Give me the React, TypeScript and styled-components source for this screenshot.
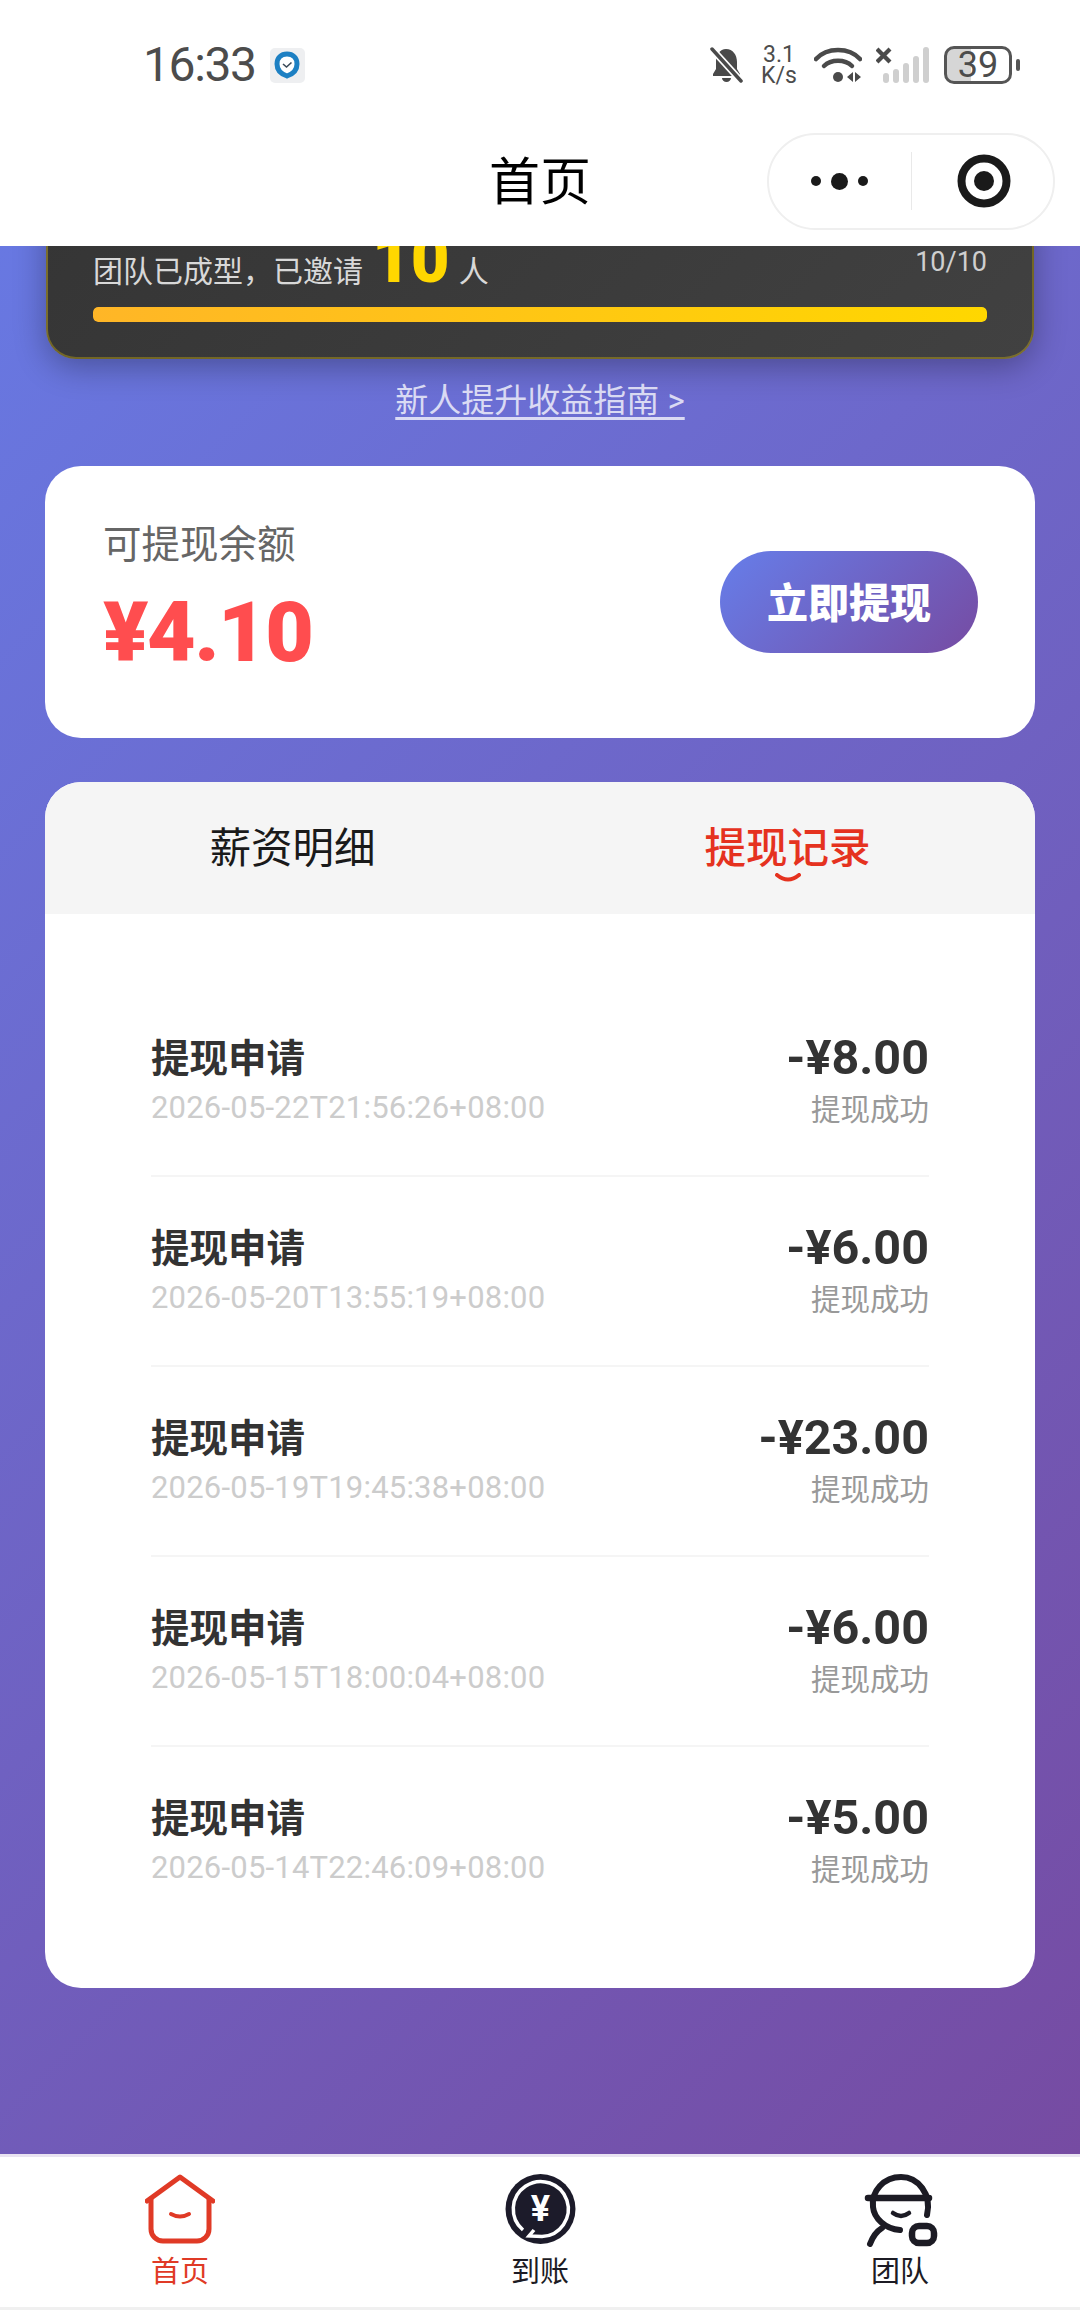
import React from 'react';
import styled, { createGlobalStyle } from 'styled-components';

const Global = createGlobalStyle`
  html, body { margin: 0; padding: 0; background: #fff; }
  * { box-sizing: border-box; }
  body { font-family: Roboto, "Noto Sans CJK SC", sans-serif; }
`;

const Screen = styled.div`
  width: 1080px;
  height: 2310px;
  display: flex;
  flex-direction: column;
  overflow: hidden;
`;

const Header = styled.header`
  height: 246px;
  flex: none;
  background: #fff;
  position: relative;
  z-index: 2;
`;

const StatusBar = styled.div`
  height: 116px;
  padding: 46px 60px 0 143px;
  display: flex;
  justify-content: space-between;
  align-items: flex-start;
`;

const TimeGroup = styled.div`
  display: flex;
  align-items: center;
  gap: 14px;
  height: 38px;
`;

const Time = styled.span`
  font-size: 48px;
  line-height: 38px;
  color: #4c4c4c;
  letter-spacing: -1.4px;
`;

const ShieldBadge = styled.span`
  width: 35px;
  height: 35px;
  border-radius: 5px;
  background: #eeeff1;
  display: flex;
  align-items: center;
  justify-content: center;
`;

const StatusIcons = styled.div`
  display: flex;
  align-items: center;
  height: 38px;
`;

const Speed = styled.span`
  margin: 0 17px 0 18px;
  width: 36px;
  font-size: 23px;
  line-height: 21px;
  color: #4c4c4c;
  text-align: center;
  display: flex;
  flex-direction: column;
  align-items: center;
  white-space: nowrap;
`;

const SignalIcon = styled.svg`
  margin: 0 14px;
`;

const Battery = styled.span`
  width: 68px;
  height: 38px;
  border: 3px solid #555;
  border-radius: 10px;
  background: linear-gradient(to right, #d6d6d6 39%, transparent 39%);
  font-size: 36px;
  line-height: 32px;
  color: #4c4c4c;
  text-align: center;
`;

const BatteryNub = styled.span`
  width: 4px;
  height: 12px;
  margin-left: 4px;
  border-radius: 2px;
  background: #555;
`;

const NavBar = styled.div`
  height: 130px;
  padding: 0 25px;
  display: grid;
  grid-template-columns: 1fr auto 1fr;
  align-items: center;
`;

const NavTitle = styled.h1`
  grid-column: 2;
  margin: 0;
  padding-top: 3px;
  font-size: 51px;
  font-weight: 400;
  line-height: 60px;
  color: #000;
`;

const Capsule = styled.div`
  grid-column: 3;
  justify-self: end;
  width: 288px;
  height: 97px;
  border: 2px solid #efefef;
  border-radius: 49px;
  display: flex;
  align-items: center;
`;

const MoreDots = styled.span`
  width: 142px;
  padding-right: 2px;
  display: flex;
  justify-content: center;
  align-items: center;
  gap: 10px;
`;

const Dot = styled.span<{ $size: number }>`
  width: ${p => p.$size}px;
  height: ${p => p.$size}px;
  border-radius: 50%;
  background: #1a1a1a;
`;

const CapsuleDivider = styled.span`
  width: 1px;
  height: 58px;
  background: #e9e9e9;
`;

const TargetSlot = styled.span`
  flex: 1;
  padding-left: 3px;
  display: flex;
  justify-content: center;
  align-items: center;
`;

const Content = styled.main`
  flex: 1;
  min-height: 0;
  padding: 0 45px;
  overflow: hidden;
  background: linear-gradient(135deg, #667eea 0%, #764ba2 100%) bottom / 100% 2300px no-repeat;
`;

const TeamCard = styled.section`
  margin: -50px 1px 0;
  padding: 0 45px 35px;
  border: 2px solid rgba(255, 215, 0, 0.3);
  border-radius: 30px;
  background: linear-gradient(135deg, #353535, #414141);
  box-shadow: 0 8px 32px rgba(0, 0, 0, 0.3);
`;

const TeamRow = styled.div`
  display: flex;
  justify-content: space-between;
  align-items: flex-start;
  height: 109px;
  padding-top: 41px;
`;

const TeamText = styled.div`
  display: flex;
  align-items: baseline;
  font-size: 30px;
  line-height: 40px;
  color: #d8d8d8;
  white-space: nowrap;
`;

const TeamCount = styled.strong`
  margin: 0 9px 0 9px;
  font-size: 67px;
  line-height: 40px;
  font-weight: 900;
  color: #ffd700;
`;

const TeamProgressText = styled.span`
  margin-top: 9px;
  font-size: 27px;
  line-height: 28px;
  color: #cfcfcf;
`;

const ProgressTrack = styled.div`
  height: 15px;
  border-radius: 5px;
  overflow: hidden;
  background: rgba(255, 255, 255, 0.1);
`;

const ProgressFill = styled.div`
  height: 100%;
  border-radius: 5px;
  background: linear-gradient(90deg, #ffb627, #ffd700);
`;

const GuideLink = styled.a`
  display: block;
  width: max-content;
  margin: 21px auto 0;
  font-size: 33px;
  line-height: 42px;
  color: rgba(255, 255, 255, 0.75);
  text-decoration: underline;
  text-underline-offset: 5px;
`;

const BalanceCard = styled.section`
  margin-top: 44px;
  height: 272px;
  padding: 0 57px 0 58px;
  border-radius: 36px;
  background: #fff;
  display: flex;
  justify-content: space-between;
  align-items: center;
`;

const BalanceInfo = styled.div`
  display: flex;
  flex-direction: column;
  gap: 21px;
  padding-bottom: 6px;
`;

const BalanceLabel = styled.span`
  font-size: 38.5px;
  line-height: 46px;
  color: #666;
`;

const BalanceValue = styled.strong`
  font-size: 84px;
  line-height: 88px;
  font-weight: 900;
  letter-spacing: -1.5px;
  color: #ff4d4f;
`;

const WithdrawButton = styled.button`
  width: 258px;
  height: 102px;
  padding: 0 0 4px;
  border: 0;
  border-radius: 51px;
  background: linear-gradient(135deg, #667eea, #764ba2);
  color: #fff;
  font-family: inherit;
  font-size: 41px;
  font-weight: 900;
`;

const RecordsCard = styled.section`
  margin-top: 44px;
  border-radius: 36px;
  background: #fff;
  overflow: hidden;
`;

const Tabs = styled.div`
  height: 132px;
  background: #f5f5f5;
  display: grid;
  grid-template-columns: 1fr 1fr;
`;

const TabItem = styled.div<{ $active?: boolean }>`
  display: flex;
  flex-direction: column;
  align-items: center;
  padding-top: 40px;
  font-size: 41.5px;
  font-weight: ${p => (p.$active ? 500 : 400)};
  line-height: 54px;
  color: ${p => (p.$active ? '#e5321f' : '#1a1a1a')};
`;

const TabSmile = styled.svg`
  margin-top: -3px;
`;

const RecordList = styled.ul`
  list-style: none;
  margin: 0;
  padding: 73px 106px 51px;
`;

const RecordRow = styled.li`
  height: 190px;
  padding-top: 46px;
  display: flex;
  justify-content: space-between;
  border-bottom: 2px solid #f5f5f5;
  &:last-child { border-bottom: 0; }
`;

const RecordCol = styled.div<{ $right?: boolean }>`
  display: flex;
  flex-direction: column;
  align-items: ${p => (p.$right ? 'flex-end' : 'flex-start')};
`;

const RecordTitle = styled.span`
  font-size: 38.5px;
  line-height: 52px;
  font-weight: 700;
  color: #333;
`;

const RecordDate = styled.span`
  margin-top: 3px;
  font-size: 31px;
  line-height: 40px;
  letter-spacing: 0.2px;
  color: #ccc;
`;

const RecordAmount = styled.span`
  font-size: 48.5px;
  line-height: 50px;
  font-weight: 700;
  color: #333;
`;

const RecordStatus = styled.span`
  margin-top: 7px;
  font-size: 29.5px;
  line-height: 40px;
  color: #999;
`;

const TabBar = styled.nav`
  flex: none;
  height: 156px;
  border-top: 3px solid #e9e3f1;
  border-bottom: 3px solid #f0f0f0;
  background: #fff;
  display: grid;
  grid-template-columns: repeat(3, 1fr);
`;

const BarItem = styled.div<{ $active?: boolean }>`
  padding-top: 17px;
  display: flex;
  flex-direction: column;
  align-items: center;
  font-size: 29px;
  line-height: 34px;
  color: ${p => (p.$active ? '#e03a26' : '#1c1b24')};
`;

const BarIcon = styled.svg`
  display: block;
  margin-bottom: 11px;
`;

const TeamBarIcon = styled(BarIcon)`
  margin-left: 2px;
  margin-bottom: 8px;
`;

const records = [
  { date: '2026-05-22T21:56:26+08:00', amount: '-¥8.00' },
  { date: '2026-05-20T13:55:19+08:00', amount: '-¥6.00' },
  { date: '2026-05-19T19:45:38+08:00', amount: '-¥23.00' },
  { date: '2026-05-15T18:00:04+08:00', amount: '-¥6.00' },
  { date: '2026-05-14T22:46:09+08:00', amount: '-¥5.00' },
];

const BellOffIcon = () => (
  <svg width="33" height="38" viewBox="0 0 33 38">
    <path d="M16 3c7 0 11 6 11 13v7l3 5v2H3v-2l3-5v-8C6 9 10 3 16 3z" fill="#4a4a4a" />
    <path d="M12 32h9a4.5 4 0 0 1-9 0z" fill="#4a4a4a" />
    <path d="M1 2 32 36" stroke="#fff" strokeWidth="7" />
    <path d="M2 3 31 35" stroke="#4a4a4a" strokeWidth="3.5" strokeLinecap="round" />
  </svg>
);

const WifiIcon = () => (
  <svg width="48" height="38" viewBox="0 0 48 38" fill="none">
    <path d="M2 13C13 1 35 1 46 13" stroke="#4a4a4a" strokeWidth="4.5" strokeLinecap="round" />
    <path d="M10 20c7-7 21-7 28 0" stroke="#4a4a4a" strokeWidth="4.5" strokeLinecap="round" />
    <circle cx="24" cy="31" r="5" fill="#4a4a4a" />
    <path d="M33 31l6-5v10zM41 26l6 5-6 5z" fill="#4a4a4a" />
  </svg>
);

const SignalBars = () => (
  <SignalIcon width="54" height="38" viewBox="0 0 54 38">
    <path d="M1 3l13 13M14 3 1 16" stroke="#4a4a4a" strokeWidth="4.2" />
    {[10, 14, 20, 27, 36].map((h, i) => (
      <rect key={h} x={7 + i * 10} y={37 - h} width="6" height={h} rx="3" fill="#cfcfcf" />
    ))}
  </SignalIcon>
);

const HomeIcon = () => (
  <BarIcon width="70" height="70" viewBox="0 0 70 70" fill="none" stroke="#e03a26" strokeLinecap="round" strokeLinejoin="round">
    <path d="M2 27 35 3l33 24" strokeWidth="5" />
    <path d="M6 25v30a12 12 0 0 0 12 12h34a12 12 0 0 0 12-12V25" strokeWidth="5" />
    <path d="M26 40q9 5 18 0" strokeWidth="4" />
  </BarIcon>
);

const CoinIcon = () => (
  <BarIcon width="71" height="70" viewBox="0 0 71 70" fill="none">
    <circle cx="35.5" cy="35" r="35" fill="#1c1b2a" />
    <path d="M18 56A27.5 27.5 0 1 1 37 62.5L24 62l5-6" stroke="#fff" strokeWidth="3.5" />
    <text x="35.5" y="47" textAnchor="middle" fontSize="36" fontWeight="700" fill="#fff" fontFamily="Roboto, sans-serif">¥</text>
  </BarIcon>
);

const TeamIcon = () => (
  <TeamBarIcon width="74" height="73" viewBox="0 0 74 73" fill="none" stroke="#1c1b24" strokeLinecap="round">
    <path d="M63 41C68 20 54 3 37 3 20 3 7 17 9 33c1 11 12 22 27 23" strokeWidth="6" />
    <path d="M4 24h61" strokeWidth="6.5" />
    <path d="M29 39q8 6 16 0" strokeWidth="4.5" />
    <path d="M18 54Q10 59 6 70" strokeWidth="6" />
    <rect x="48" y="52" width="22" height="17" rx="7" strokeWidth="6.5" />
  </TeamBarIcon>
);

export default function App() {
  return (
    <Screen>
      <Global />
      <Header>
        <StatusBar>
          <TimeGroup>
            <Time>16:33</Time>
            <ShieldBadge>
              <svg width="26" height="28" viewBox="0 0 26 28" fill="none">
                <path d="M13 3c6 0 10 4 10 10 0 6-4 10-10 12C7 23 3 19 3 13 3 7 7 3 13 3z" fill="#fff" stroke="#1d80c3" strokeWidth="5" />
                <path d="M9 13l3.5 3 5-4.5" stroke="#3b4a59" strokeWidth="1.6" />
              </svg>
            </ShieldBadge>
          </TimeGroup>
          <StatusIcons>
            <BellOffIcon />
            <Speed><span>3.1</span><span>K/s</span></Speed>
            <WifiIcon />
            <SignalBars />
            <Battery>39</Battery>
            <BatteryNub />
          </StatusIcons>
        </StatusBar>
        <NavBar>
          <NavTitle>首页</NavTitle>
          <Capsule>
            <MoreDots><Dot $size={10} /><Dot $size={17} /><Dot $size={10} /></MoreDots>
            <CapsuleDivider />
            <TargetSlot>
              <svg width="54" height="54" viewBox="0 0 54 54">
                <circle cx="27" cy="27" r="22.5" fill="none" stroke="#1a1a1a" strokeWidth="8" />
                <circle cx="27" cy="27" r="10" fill="#1a1a1a" />
              </svg>
            </TargetSlot>
          </Capsule>
        </NavBar>
      </Header>

      <Content>
        <TeamCard>
          <TeamRow>
            <TeamText>{'团队已成型\uFF0C已邀请'}<TeamCount>10</TeamCount>人</TeamText>
            <TeamProgressText>10/10</TeamProgressText>
          </TeamRow>
          <ProgressTrack><ProgressFill style={{ width: `${(10 / 10) * 100}%` }} /></ProgressTrack>
        </TeamCard>
        <GuideLink>新人提升收益指南 &gt;</GuideLink>

        <BalanceCard>
          <BalanceInfo>
            <BalanceLabel>可提现余额</BalanceLabel>
            <BalanceValue>¥4.10</BalanceValue>
          </BalanceInfo>
          <WithdrawButton>立即提现</WithdrawButton>
        </BalanceCard>

        <RecordsCard>
          <Tabs>
            <TabItem>薪资明细</TabItem>
            <TabItem $active>
              提现记录
              <TabSmile width="28" height="12" viewBox="0 0 28 12" fill="none">
                <path d="M3 2q11 9 22 0" stroke="#e5321f" strokeWidth="4" strokeLinecap="round" />
              </TabSmile>
            </TabItem>
          </Tabs>
          <RecordList>
            {records.map(r => (
              <RecordRow key={r.date}>
                <RecordCol>
                  <RecordTitle>提现申请</RecordTitle>
                  <RecordDate>{r.date}</RecordDate>
                </RecordCol>
                <RecordCol $right>
                  <RecordAmount>{r.amount}</RecordAmount>
                  <RecordStatus>提现成功</RecordStatus>
                </RecordCol>
              </RecordRow>
            ))}
          </RecordList>
        </RecordsCard>
      </Content>

      <TabBar>
        <BarItem $active><HomeIcon />首页</BarItem>
        <BarItem><CoinIcon />到账</BarItem>
        <BarItem><TeamIcon />团队</BarItem>
      </TabBar>
    </Screen>
  );
}
